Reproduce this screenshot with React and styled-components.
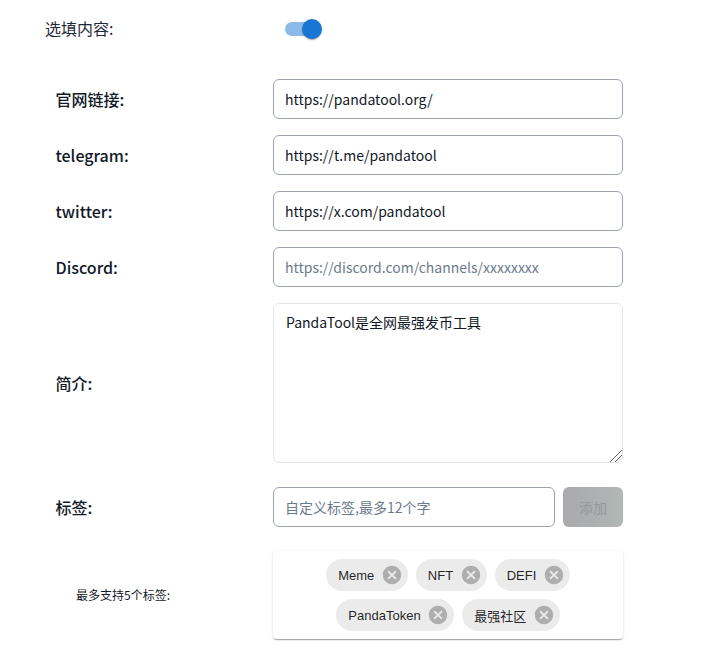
import React from "react";
import styled, { createGlobalStyle } from "styled-components";

const cjk = `"Noto Sans CJK SC", "Noto Sans", sans-serif`;

const GlobalStyle = createGlobalStyle`
  html, body { margin: 0; padding: 0; background: #fff; }
  body { font-family: ${cjk}; color: rgba(0, 0, 0, 0.87); }
  * { box-sizing: border-box; }
`;

const Page = styled.div`
  width: 709px;
  height: 657px;
  overflow: hidden;
  padding: 9px 0 0 45px;
`;

const ToggleRow = styled.div`
  display: flex;
  align-items: center;
  height: 40px;
  margin-bottom: 30px;
`;

const ToggleLabel = styled.div`
  width: 228px;
  font-size: 16px;
  line-height: 38px;
  padding-bottom: 2px;
  height: 40px;
  color: #1f2937;
`;

const Switch = styled.div`
  position: relative;
  width: 58px;
  height: 38px;
  padding: 12px;
`;

const Track = styled.div`
  width: 34px;
  height: 14px;
  border-radius: 7px;
  background: #1976d2;
  opacity: 0.5;
`;

const Thumb = styled.div`
  position: absolute;
  top: 9px;
  left: 29px;
  width: 20px;
  height: 20px;
  border-radius: 50%;
  background: #1976d2;
  box-shadow: 0 2px 1px -1px rgba(0, 0, 0, 0.2), 0 1px 1px rgba(0, 0, 0, 0.14), 0 1px 3px rgba(0, 0, 0, 0.12);
`;

const Fields = styled.div`
  display: flex;
  flex-direction: column;
  gap: 16px;
  padding-left: 10.5px;
`;

const Row = styled.div`
  display: flex;
  align-items: center;
  margin-top: ${(p) => p.$offset || 0}px;
`;

const Label = styled.div`
  width: 217.5px;
  flex: none;
  font-size: 16px;
  font-weight: 500;
  color: #111827;
`;

const Input = styled.input`
  width: ${(p) => p.$width || 350}px;
  height: 40px;
  padding: 0 11px;
  border: 1px solid #9ca3af;
  border-radius: 6px;
  outline: none;
  background: #fff;
  font-family: ${cjk};
  font-size: 14px;
  color: #111827;
  &::placeholder { color: #6b7b8c; opacity: 1; }
`;

const TextArea = styled.textarea`
  display: block;
  width: 350px;
  height: 160px;
  padding: 8px 12px;
  border: 1px solid #e5e7eb;
  border-radius: 6px;
  outline: none;
  font-family: ${cjk};
  font-size: 14px;
  line-height: 21px;
  color: #111827;
  &::-webkit-resizer {
    background: linear-gradient(
      135deg,
      transparent 0 57%,
      #666 57% 63%,
      transparent 63% 74%,
      #666 74% 80%,
      transparent 80%
    );
  }
`;

const AddButton = styled.button`
  width: 60px;
  height: 40px;
  margin-left: 8px;
  border: 0;
  border-radius: 6px;
  padding: 0;
  background: linear-gradient(90deg, #aaa8ae, #b0b8b4);
  font-family: ${cjk};
  font-size: 14px;
  color: #94989c;
`;

const HintLabel = styled.div`
  width: 217.5px;
  flex: none;
  padding: 0 0 2px 20.5px;
  font-size: 12px;
  color: #111827;
`;

const TagCard = styled.div`
  width: 350px;
  height: 88px;
  padding: 8px 0;
  display: flex;
  flex-wrap: wrap;
  justify-content: center;
  align-content: flex-start;
  gap: 8px;
  border-radius: 4px;
  background: #fff;
  box-shadow: 0 2px 1px -1px rgba(0, 0, 0, 0.2), 0 1px 1px rgba(0, 0, 0, 0.14), 0 1px 3px rgba(0, 0, 0, 0.12);
`;

const Chip = styled.div`
  display: inline-flex;
  align-items: center;
  height: 32px;
  padding: 0 5px 0 12px;
  border-radius: 16px;
  background: rgba(0, 0, 0, 0.08);
  font-family: "Liberation Sans", "Noto Sans CJK SC", sans-serif;
  font-size: 13px;
  color: rgba(0, 0, 0, 0.87);
`;

const ChipText = styled.span`
  margin-right: 6.5px;
  white-space: nowrap;
`;

const ChipIcon = styled.svg`
  width: 22px;
  height: 22px;
  fill: rgba(0, 0, 0, 0.26);
`;

const CancelIcon = () => (
  <ChipIcon viewBox="0 0 24 24">
    <path d="M12 2C6.47 2 2 6.47 2 12s4.47 10 10 10 10-4.47 10-10S17.53 2 12 2zm5 13.59L15.59 17 12 13.41 8.41 17 7 15.59 10.59 12 7 8.41 8.41 7 12 10.59 15.59 7 17 8.41 13.41 12 17 15.59z" />
  </ChipIcon>
);

const links = [
  { label: "官网链接:", value: "https://pandatool.org/" },
  { label: "telegram:", value: "https://t.me/pandatool" },
  { label: "twitter:", value: "https://x.com/pandatool" },
  { label: "Discord:", placeholder: "https://discord.com/channels/xxxxxxxx" },
];

const tags = ["Meme", "NFT", "DEFI", "PandaToken", "最强社区"];

export default function App() {
  return (
    <Page>
      <GlobalStyle />
      <ToggleRow>
        <ToggleLabel>选填内容:</ToggleLabel>
        <Switch>
          <Track />
          <Thumb />
        </Switch>
      </ToggleRow>
      <Fields>
        {links.map((link) => (
          <Row key={link.label}>
            <Label>{link.label}</Label>
            <Input readOnly value={link.value || ""} placeholder={link.placeholder} />
          </Row>
        ))}
        <Row>
          <Label>简介:</Label>
          <TextArea readOnly value="PandaTool是全网最强发币工具" />
        </Row>
        <Row $offset={8}>
          <Label>标签:</Label>
          <Input $width={282} readOnly value="" placeholder="自定义标签,最多12个字" />
          <AddButton disabled>添加</AddButton>
        </Row>
        <Row $offset={8}>
          <HintLabel>最多支持5个标签:</HintLabel>
          <TagCard>
            {tags.map((tag) => (
              <Chip key={tag}>
                <ChipText>{tag}</ChipText>
                <CancelIcon />
              </Chip>
            ))}
          </TagCard>
        </Row>
      </Fields>
    </Page>
  );
}
